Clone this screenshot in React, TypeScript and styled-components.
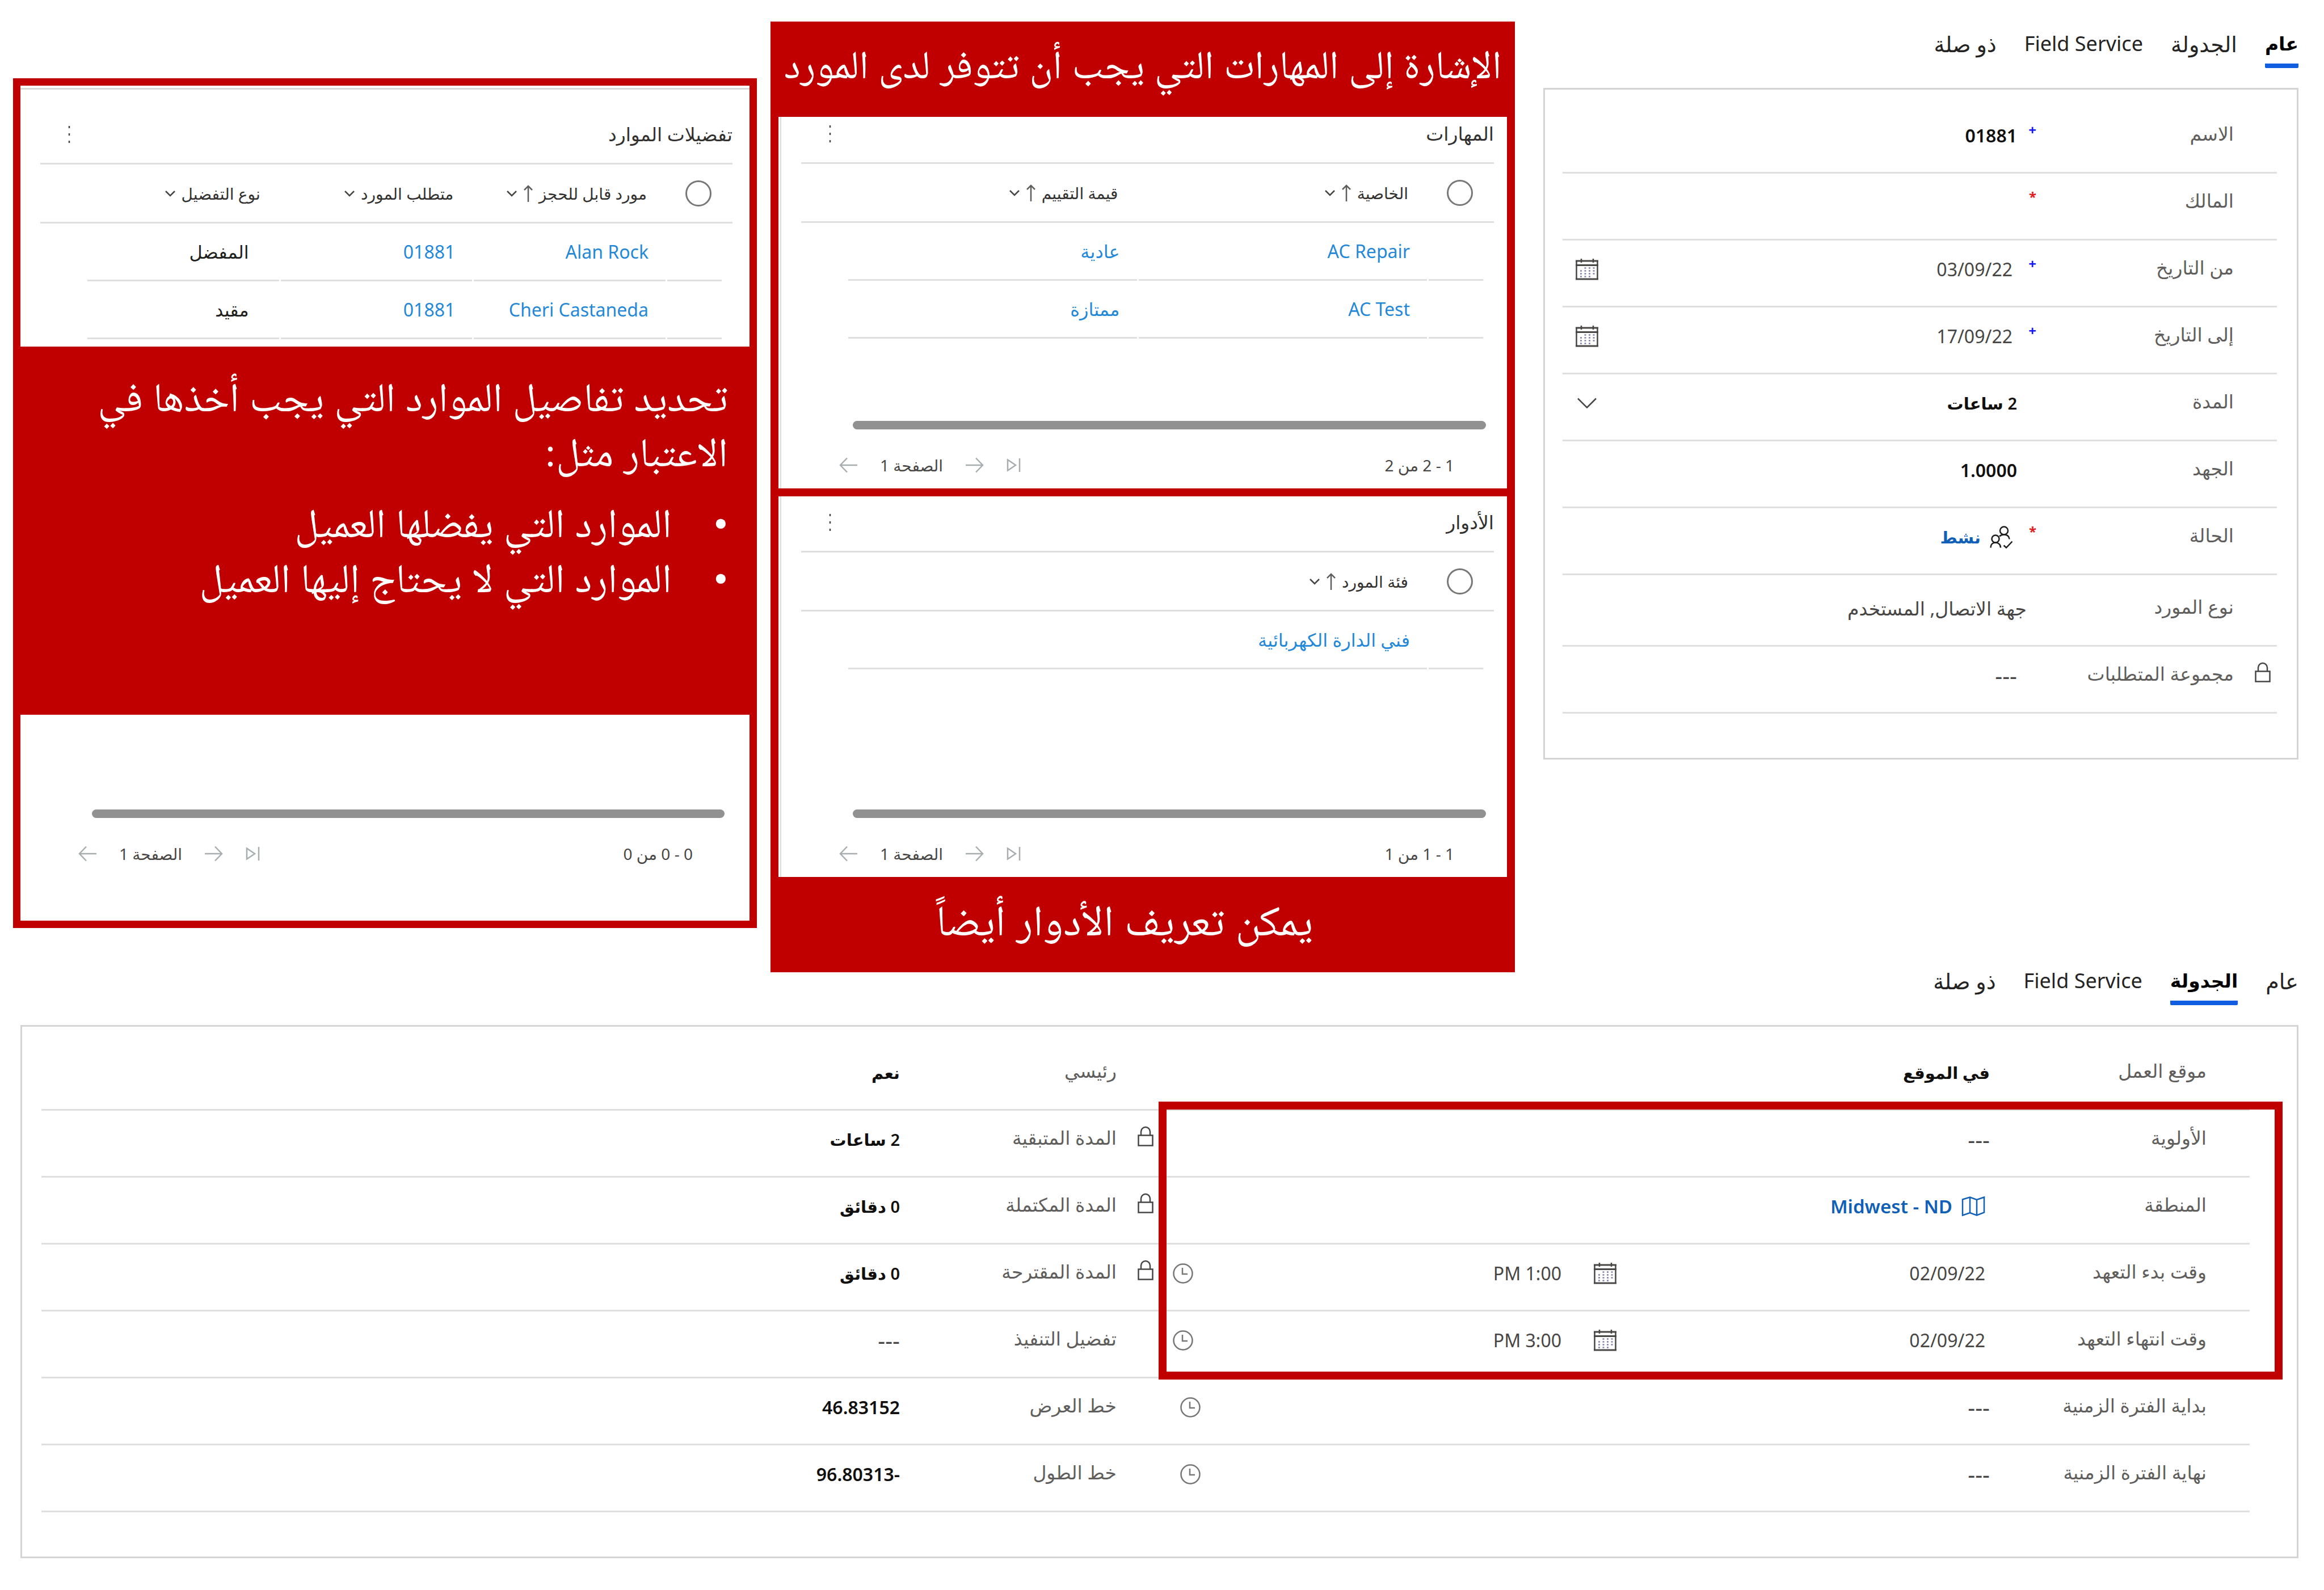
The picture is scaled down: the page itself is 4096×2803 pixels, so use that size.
import React, { useId, useState } from "react";
import styled, { createGlobalStyle, css } from "styled-components";

const red = "#c00000";
const line = "#e1dfdd";
const frame = "#d4d4d4";
const uiFont = '"Noto Sans", "DejaVu Sans", sans-serif';
const captionFont = '"Times New Roman", "Noto Naskh Arabic", "Noto Sans", sans-serif';

const Global = createGlobalStyle`
  *, *::before, *::after { box-sizing: border-box; }
  body {
    margin: 0;
    background: #ffffff;
    color: #323130;
    font-family: ${uiFont};
    font-size: 32px;
  }
  button, input, select { font: inherit; color: inherit; }
`;

const Page = styled.main`
  direction: rtl;
  padding-bottom: 54px;
`;

const Overview = styled.section`
  display: grid;
  grid-template-columns: minmax(0, 1357fr) minmax(0, 1312fr) minmax(0, 1311fr);
  column-gap: 24px;
  align-items: start;
  padding: 38px 45px 0 23px;
`;

/* ---------- tabs ---------- */

const TabBar = styled.nav`
  display: flex;
  gap: 49px;
`;

const Tab = styled.button<{ $active: boolean; $latin: boolean }>`
  height: 58px;
  padding: 0 0 20px;
  border: 0;
  border-bottom: 8px solid ${(p) => (p.$active ? "#115ee0" : "transparent")};
  border-radius: 2px;
  background: none;
  color: ${(p) => (p.$active ? "#000000" : "#252423")};
  font-size: ${(p) => (p.$latin ? 36 : p.$active ? 33 : 38)}px;
  font-weight: ${(p) => (p.$active ? 600 : 400)};
  line-height: 30px;
  white-space: nowrap;
  cursor: pointer;
`;

const tabNames = ["عام", "الجدولة", "Field Service", "ذو صلة"];

function Tabs({ initial }: { initial: number }) {
  const [active, setActive] = useState(initial);
  return (
    <TabBar>
      {tabNames.map((name, i) => (
        <Tab
          key={name}
          type="button"
          $active={i === active}
          $latin={/[a-z]/i.test(name)}
          onClick={() => setActive(i)}
        >
          {name}
        </Tab>
      ))}
    </TabBar>
  );
}

/* ---------- icons ---------- */

const Icon = styled.svg<{ $w: number; $h: number; $color?: string }>`
  display: block;
  flex: none;
  width: ${(p) => p.$w}px;
  height: ${(p) => p.$h}px;
  fill: none;
  stroke: ${(p) => p.$color || "#484644"};
  stroke-width: 2.5px;
`;

const LockIcon = () => (
  <Icon $w={28} $h={36} viewBox="0 0 28 36">
    <path d="M1.5 16.5h25v18h-25z M6 16V10a8 8 0 0 1 16 0v6" />
  </Icon>
);

const CalendarIcon = () => (
  <Icon $w={40} $h={38} viewBox="0 0 40 38">
    <path d="M1.5 4v32 M38.5 4v32 M10 0v7 M31 0v7" />
    <path d="M0 4h40 M0 11.500h40 M0 36h40" style={{ strokeWidth: 3 }} />
    <path
      d="M15.500 16.500h18 M8 21.500h26 M8 26.500h26 M8 31.500h18"
      strokeDasharray="3 4.500"
      stroke="#8582ac"
    />
  </Icon>
);

const ClockIcon = () => (
  <Icon $w={36} $h={36} viewBox="0 0 36 36" $color="#797775">
    <circle cx="18" cy="18" r="16.500" />
    <path d="M17 8v11h9" />
  </Icon>
);

const ChevronIcon = () => (
  <Icon $w={34} $h={20} viewBox="0 0 34 20">
    <path d="M1 1.500l16 16 16-16" />
  </Icon>
);

const PeopleIcon = () => (
  <Icon $w={40} $h={40} viewBox="0 0 40 40" $color="#201f1e">
    <circle cx="25" cy="8.500" r="7" />
    <circle cx="10" cy="23" r="6.500" />
    <path d="M1.500 38.500c0-5.500 3.500-9 8.500-9s9 3.500 9 9 M17 18.500c2-2 5-3 8-3 5.500 0 9 3 9.500 8 M24.500 34.500l4.500 4 10.500-11" />
  </Icon>
);

const MapIcon = () => (
  <Icon $w={42} $h={36} viewBox="0 0 42 36" $color="#1160b7">
    <path d="M2 5.500l13-4 12 4.500 13-4.500v27l-13 5-12-4.500-13 4.500z M15 1.500v27.500 M27 6v27.500" />
  </Icon>
);

const DotsIcon = () => (
  <Icon $w={6} $h={32} viewBox="0 0 6 32">
    <path d="M3 1v4 M3 14v4 M3 27v4" />
  </Icon>
);

const SortUpIcon = () => (
  <Icon $w={18} $h={30} viewBox="0 0 18 30" $color="#605e5c">
    <path d="M9 30V2 M2 9l7-7 7 7" />
  </Icon>
);

const SmallChevron = () => (
  <Icon $w={20} $h={12} viewBox="0 0 20 12">
    <path d="M2 2l8 8 8-8" />
  </Icon>
);

const PageArrow = ({ back }: { back?: boolean }) => (
  <Icon $w={32} $h={28} viewBox="0 0 32 28" $color="#a8aeb0">
    <path d={back ? "M32 14H2 M14 1.500L2 14l12 12.500" : "M0 14h30 M18 1.500L30 14 18 26.500"} />
  </Icon>
);

const LastPage = () => (
  <Icon $w={26} $h={24} viewBox="0 0 26 24" $color="#a8aeb0">
    <path d="M2 2.500l14 9.500-14 9.500z M23 0v24" />
  </Icon>
);

const IconButton = styled.button`
  display: flex;
  flex: none;
  padding: 0;
  border: 0;
  background: none;
  cursor: pointer;
`;

/* ---------- field rows ---------- */

const Panel = styled.section<{ $wide?: boolean }>`
  margin-top: 35px;
  border: 3px solid ${frame};
  ${(p) =>
    p.$wide
      ? css`
          display: grid;
          grid-template-columns: 1921fr 1971fr;
          padding: 30px 83px 78px 34px;
        `
      : css`
          padding: 30px 35px 78px 31px;
        `}
`;

const Row = styled.div<{ $col?: number; $row?: number; $tall?: boolean }>`
  display: flex;
  align-items: center;
  min-width: 0;
  height: ${(p) => (p.$tall ? 126 : 118)}px;
  padding-bottom: ${(p) => (p.$tall ? 6 : 14)}px;
  border-bottom: 3px solid ${line};
  ${(p) => p.$col && `grid-column: ${p.$col}; grid-row: ${p.$row};`}
`;

const LockSlot = styled.span`
  display: flex;
  flex: none;
  width: 76px;
  padding: 0 11px 12px 0;
`;

const Label = styled.label`
  flex: none;
  width: 340px;
  padding-bottom: 6px;
  color: #605e5c;
  font-size: 33px;
  line-height: 48px;
  white-space: nowrap;
`;

const Mark = styled.span<{ $kind?: "plus" | "star" }>`
  flex: none;
  width: 42px;
  padding: 0 8px 20px 0;
  color: ${(p) => (p.$kind === "plus" ? "#1414ff" : "#e02020")};
  font-size: 24px;
  font-weight: 700;
  line-height: 32px;
`;

const Control = styled.div<{ $inset?: number; $end?: number; $gap?: number }>`
  display: flex;
  flex: 1;
  align-items: center;
  gap: ${(p) => p.$gap || 20}px;
  min-width: 0;
  padding-right: ${(p) => p.$inset || 0}px;
  padding-left: ${(p) => p.$end || 0}px;
`;

const field = css<{ $strong?: boolean; $size?: number }>`
  flex: 1;
  min-width: 0;
  width: 100%;
  height: 60px;
  margin: 0;
  padding: 0;
  border: 0;
  outline: 0;
  background: none;
  color: ${(p) => (p.$strong ? "#11100f" : "#484644")};
  font-size: ${(p) => p.$size || 32}px;
  font-weight: ${(p) => (p.$strong ? 600 : 400)};
  text-align: right;
`;

const Input = styled.input<{ $strong?: boolean; $size?: number }>`
  ${field}
`;

const Select = styled.select<{ $strong?: boolean; $size?: number }>`
  ${field}
  appearance: none;
`;

const Lookup = styled.a<{ $size: number }>`
  color: #1160b7;
  font-size: ${(p) => p.$size}px;
  font-weight: 600;
  text-decoration: none;
  white-space: nowrap;
`;

const DatePart = styled.div`
  display: flex;
  flex: none;
  align-items: center;
  width: 690px;
  margin-left: 37px;
`;

type Kind = "text" | "date" | "datetime" | "time" | "select" | "people" | "map" | "multi";

interface FieldSpec {
  label: string;
  value?: string;
  time?: string;
  kind?: Kind;
  mark?: "plus" | "star";
  locked?: boolean;
  plain?: boolean;
  ltr?: boolean;
  tall?: boolean;
}

function textSize(spec: FieldSpec) {
  if (spec.value === "---") return 40;
  if (spec.ltr) return 32;
  return spec.plain ? 33 : 29;
}

function FieldControl({ id, spec }: { id: string; spec: FieldSpec }) {
  const value = spec.value || "";
  switch (spec.kind) {
    case "date":
      return (
        <Control $inset={8} $end={23}>
          <Input id={id} defaultValue={value} dir="ltr" />
          <IconButton type="button" aria-label="calendar">
            <CalendarIcon />
          </IconButton>
        </Control>
      );
    case "datetime":
      return (
        <Control $inset={8} $end={23}>
          <DatePart>
            <Input id={id} defaultValue={value} dir="ltr" />
            <IconButton type="button" aria-label="calendar">
              <CalendarIcon />
            </IconButton>
          </DatePart>
          <Input defaultValue={spec.time} dir="ltr" aria-label={spec.label} />
          <IconButton type="button" aria-label="clock">
            <ClockIcon />
          </IconButton>
        </Control>
      );
    case "time":
      return (
        <Control $end={36}>
          <Input id={id} defaultValue={value} dir="ltr" $size={textSize(spec)} />
          <IconButton type="button" aria-label="clock">
            <ClockIcon />
          </IconButton>
        </Control>
      );
    case "select":
      return (
        <Control $end={26}>
          <Select id={id} defaultValue={value} $strong $size={textSize(spec)}>
            <option>{value}</option>
          </Select>
          <ChevronIcon />
        </Control>
      );
    case "people":
    case "map":
      return (
        <Control $inset={8} $gap={16}>
          {spec.kind === "people" ? <PeopleIcon /> : <MapIcon />}
          <Lookup id={id} href="#" $size={spec.kind === "people" ? 29 : 33}>
            {value}
          </Lookup>
        </Control>
      );
    default:
      return (
        <Control>
          <Input
            id={id}
            defaultValue={value}
            dir={spec.ltr ? "ltr" : "rtl"}
            $strong={!spec.plain}
            $size={textSize(spec)}
          />
        </Control>
      );
  }
}

function Field({ spec, col, row }: { spec: FieldSpec; col?: number; row?: number }) {
  const id = useId();
  return (
    <Row $col={col} $row={row} $tall={spec.tall}>
      <LockSlot>{spec.locked && <LockIcon />}</LockSlot>
      <Label htmlFor={id}>{spec.label}</Label>
      {spec.kind === "multi" ? (
        <MultiGap />
      ) : (
        <Mark $kind={spec.mark}>{spec.mark === "plus" ? "+" : spec.mark === "star" ? "*" : ""}</Mark>
      )}
      <FieldControl id={id} spec={spec} />
    </Row>
  );
}

const MultiGap = styled.span`
  flex: none;
  width: 25px;
`;

const Highlight = styled.div`
  z-index: 1;
  grid-area: 2 / 1 / 6 / 2;
  margin: -16px -58px -2px -2px;
  border: 14px solid ${red};
  pointer-events: none;
`;

const generalFields: FieldSpec[] = [
  { label: "الاسم", value: "01881", mark: "plus", ltr: true },
  { label: "المالك", mark: "star" },
  { label: "من التاريخ", value: "03/09/22", mark: "plus", kind: "date" },
  { label: "إلى التاريخ", value: "17/09/22", mark: "plus", kind: "date" },
  { label: "المدة", value: "2 ساعات", kind: "select" },
  { label: "الجهد", value: "1.0000", ltr: true },
  { label: "الحالة", value: "نشط", mark: "star", kind: "people" },
  { label: "نوع المورد", value: "جهة الاتصال, المستخدم", kind: "multi", plain: true, tall: true },
  { label: "مجموعة المتطلبات", value: "---", locked: true, plain: true },
];

const scheduleFields: FieldSpec[] = [
  { label: "موقع العمل", value: "في الموقع" },
  { label: "الأولوية", value: "---", plain: true },
  { label: "المنطقة", value: "Midwest - ND", kind: "map" },
  { label: "وقت بدء التعهد", value: "02/09/22", time: "PM 1:00", kind: "datetime" },
  { label: "وقت انتهاء التعهد", value: "02/09/22", time: "PM 3:00", kind: "datetime" },
  { label: "بداية الفترة الزمنية", value: "---", kind: "time" },
  { label: "نهاية الفترة الزمنية", value: "---", kind: "time" },
];

const statusFields: FieldSpec[] = [
  { label: "رئيسي", value: "نعم" },
  { label: "المدة المتبقية", value: "2 ساعات", locked: true },
  { label: "المدة المكتملة", value: "0 دقائق", locked: true },
  { label: "المدة المقترحة", value: "0 دقائق", locked: true },
  { label: "تفضيل التنفيذ", value: "---", plain: true },
  { label: "خط العرض", value: "46.83152", ltr: true },
  { label: "خط الطول", value: "96.80313-", ltr: true },
];

/* ---------- record lists ---------- */

const List = styled.section<{ $top: number; $start: number; $end: number; $edge?: boolean }>`
  padding: ${(p) => p.$top}px ${(p) => p.$start}px 0 ${(p) => p.$end}px;
  background: #ffffff;
  box-shadow: ${(p) => (p.$edge ? "inset 3px 0 #ffffff, inset 5px 0 #dcdcdc" : "none")};
`;

const ListTitle = styled.header`
  display: flex;
  align-items: center;
  justify-content: space-between;
  height: 83px;
  padding: 0 0 20px 48px;
  border-bottom: 3px solid ${line};
`;

const Heading = styled.h2`
  margin: 0;
  color: #323130;
  font-size: 33px;
  font-weight: 500;
  line-height: 60px;
`;

const Viewport = styled.div<{ $min: number }>`
  min-height: ${(p) => p.$min}px;
`;

const Table = styled.table`
  width: 100%;
  border-spacing: 0;
  table-layout: fixed;
`;

const CheckCol = styled.col`
  width: 118px;
`;

const EndCol = styled.col`
  width: 80px;
`;

const Th = styled.th`
  height: 104px;
  padding: 0 33px 0 0;
  border-bottom: 3px solid ${line};
  color: #323130;
  font-size: 28px;
  font-weight: 500;
  text-align: right;
  white-space: nowrap;
`;

const ThInner = styled.span`
  display: flex;
  gap: 10px;
  align-items: center;
`;

const Radio = styled.input`
  display: block;
  width: 46px;
  height: 46px;
  margin: 0 4px 0 0;
  border: 3px solid #797775;
  border-radius: 50%;
  appearance: none;
`;

const Td = styled.td<{ $lead?: boolean }>`
  height: 102px;
  padding: 0 ${(p) => (p.$lead ? 19 : 0)}px 0 3px;
`;

const Cell = styled.div<{ $shift?: boolean }>`
  height: 102px;
  padding: 0 ${(p) => (p.$shift ? 53 : 30)}px 0 0;
  border-bottom: 3px solid ${line};
  color: #201f1e;
  line-height: 99px;
  white-space: nowrap;
`;

const RecordLink = styled.a`
  color: #2488d8;
  text-decoration: none;
`;

const ScrollTrack = styled.div`
  height: 15px;
  margin: 0 14px 0 91px;
  border-radius: 8px;
  background: #919191;
`;

const Pager = styled.footer<{ $bottom: number }>`
  display: flex;
  align-items: center;
  height: ${(p) => 104 + p.$bottom}px;
  padding: 22px 70px ${(p) => p.$bottom}px 67px;
  color: #484644;
  font-size: 28px;
`;

const PagerSpace = styled.span`
  flex: 1;
`;

const PageControls = styled.div`
  display: flex;
  gap: 40px;
  align-items: center;
`;

interface Column {
  name: string;
  sorted?: boolean;
}

interface ListData {
  title: string;
  columns: Column[];
  rows: string[][];
  plainLast?: boolean;
}

function ListGrid({ data, min }: { data: ListData; min: number }) {
  const last = data.columns.length - 1;
  return (
    <>
      <ListTitle>
        <Heading>{data.title}</Heading>
        <IconButton type="button" aria-label="more">
          <DotsIcon />
        </IconButton>
      </ListTitle>
      <Viewport $min={min}>
        <Table>
          <colgroup>
            <CheckCol />
            {data.columns.map((c) => (
              <col key={c.name} />
            ))}
            <EndCol />
          </colgroup>
          <thead>
            <tr>
              <Th>
                <Radio type="radio" aria-label={data.title} />
              </Th>
              {data.columns.map((c) => (
                <Th key={c.name}>
                  <ThInner>
                    {c.name}
                    {c.sorted && <SortUpIcon />}
                    <SmallChevron />
                  </ThInner>
                </Th>
              ))}
              <Th />
            </tr>
          </thead>
          <tbody>
            {data.rows.map((row) => (
              <tr key={row[0]}>
                <Td $lead>
                  <Cell />
                </Td>
                {row.map((text, i) => {
                  const plain = data.plainLast && i === last;
                  return (
                    <Td key={i}>
                      <Cell $shift={plain}>
                        {plain ? text : <RecordLink href="#">{text}</RecordLink>}
                      </Cell>
                    </Td>
                  );
                })}
                <td />
              </tr>
            ))}
          </tbody>
        </Table>
      </Viewport>
    </>
  );
}

function ListFooter({ range, bottom = 0 }: { range: string; bottom?: number }) {
  return (
    <>
      <ScrollTrack />
      <Pager $bottom={bottom}>
        {range}
        <PagerSpace />
        <PageControls>
          <IconButton type="button" aria-label="last page">
            <LastPage />
          </IconButton>
          <IconButton type="button" aria-label="next page">
            <PageArrow />
          </IconButton>
          <span>الصفحة 1</span>
          <IconButton type="button" aria-label="previous page">
            <PageArrow back />
          </IconButton>
        </PageControls>
      </Pager>
    </>
  );
}

const skills: ListData = {
  title: "المهارات",
  columns: [
    { name: "الخاصية", sorted: true },
    { name: "قيمة التقييم", sorted: true },
  ],
  rows: [
    ["AC Repair", "عادية"],
    ["AC Test", "ممتازة"],
  ],
};

const roles: ListData = {
  title: "الأدوار",
  columns: [{ name: "فئة المورد", sorted: true }],
  rows: [["فني الدارة الكهربائية"]],
};

const preferences: ListData = {
  title: "تفضيلات الموارد",
  columns: [
    { name: "مورد قابل للحجز", sorted: true },
    { name: "متطلب المورد" },
    { name: "نوع التفضيل" },
  ],
  rows: [
    ["Alan Rock", "01881", "المفضل"],
    ["Cheri Castaneda", "01881", "مقيد"],
  ],
  plainLast: true,
};

/* ---------- callouts ---------- */

const GeneralColumn = styled.div`
  margin-left: 26px;
  padding-top: 24px;
`;

const Callout = styled.div`
  padding: 0 14px;
  background: ${red};
`;

const Caption = styled.p<{ $size: number; $end?: number }>`
  display: flex;
  align-items: center;
  justify-content: center;
  height: 168px;
  margin: 0 -14px;
  padding: 0 ${(p) => p.$end || 0}px 14px 0;
  color: #ffffff;
  font-family: ${captionFont};
  font-size: ${(p) => p.$size}px;
  line-height: 96px;
  white-space: nowrap;
`;

const Divider = styled.div`
  height: 14px;
`;

const SideCallout = styled.div`
  margin-top: 100px;
  padding: 13px;
  background: ${red};
`;

const TopRule = styled.div`
  height: 7px;
  border-top: 4px solid #ffffff;
  background: #d8d8d8;
`;

const Note = styled.div`
  height: 649px;
  padding: 42px 38px 0;
  color: #ffffff;
  font-family: ${captionFont};
  font-size: 72px;
  line-height: 97px;
  white-space: nowrap;
`;

const NoteText = styled.p`
  margin: 0 0 28px;
`;

const NoteList = styled.ul`
  margin: 0;
  padding: 0;
  list-style: none;
`;

const NoteItem = styled.li`
  display: flex;

  &::before {
    content: "•";
    width: 99px;
  }
`;

const Schedule = styled.section`
  padding: 0 45px 0 36px;
`;

export default function App() {
  return (
    <>
      <Global />
      <Page>
        <Overview>
          <GeneralColumn>
            <Tabs initial={0} />
            <Panel>
              {generalFields.map((spec) => (
                <Field key={spec.label} spec={spec} />
              ))}
            </Panel>
          </GeneralColumn>

          <Callout>
            <Caption $size={70}>الإشارة إلى المهارات التي يجب أن تتوفر لدى المورد</Caption>
            <List $top={0} $start={23} $end={40} $edge>
              <ListGrid data={skills} min={453} />
              <ListFooter range="1 - 2 من 2" />
            </List>
            <Divider />
            <List $top={16} $start={23} $end={40} $edge>
              <ListGrid data={roles} min={453} />
              <ListFooter range="1 - 1 من 1" />
            </List>
            <Caption $size={76} $end={64}>
              يمكن تعريف الأدوار أيضاً
            </Caption>
          </Callout>

          <SideCallout>
            <TopRule />
            <List $top={49} $start={30} $end={35}>
              <ListGrid data={preferences} min={321} />
            </List>
            <Note>
              <NoteText>
                تحديد تفاصيل الموارد التي يجب أخذها في
                <br />
                الاعتبار مثل:
              </NoteText>
              <NoteList>
                <NoteItem>الموارد التي يفضلها العميل</NoteItem>
                <NoteItem>الموارد التي لا يحتاج إليها العميل</NoteItem>
              </NoteList>
            </Note>
            <List $top={167} $start={30} $end={35}>
              <ListFooter range="0 - 0 من 0" bottom={77} />
            </List>
          </SideCallout>
        </Overview>

        <Schedule>
          <Tabs initial={1} />
          <Panel $wide>
            {scheduleFields.map((spec, i) => (
              <Field key={spec.label} spec={spec} col={1} row={i + 1} />
            ))}
            {statusFields.map((spec, i) => (
              <Field key={spec.label} spec={spec} col={2} row={i + 1} />
            ))}
            <Highlight />
          </Panel>
        </Schedule>
      </Page>
    </>
  );
}
